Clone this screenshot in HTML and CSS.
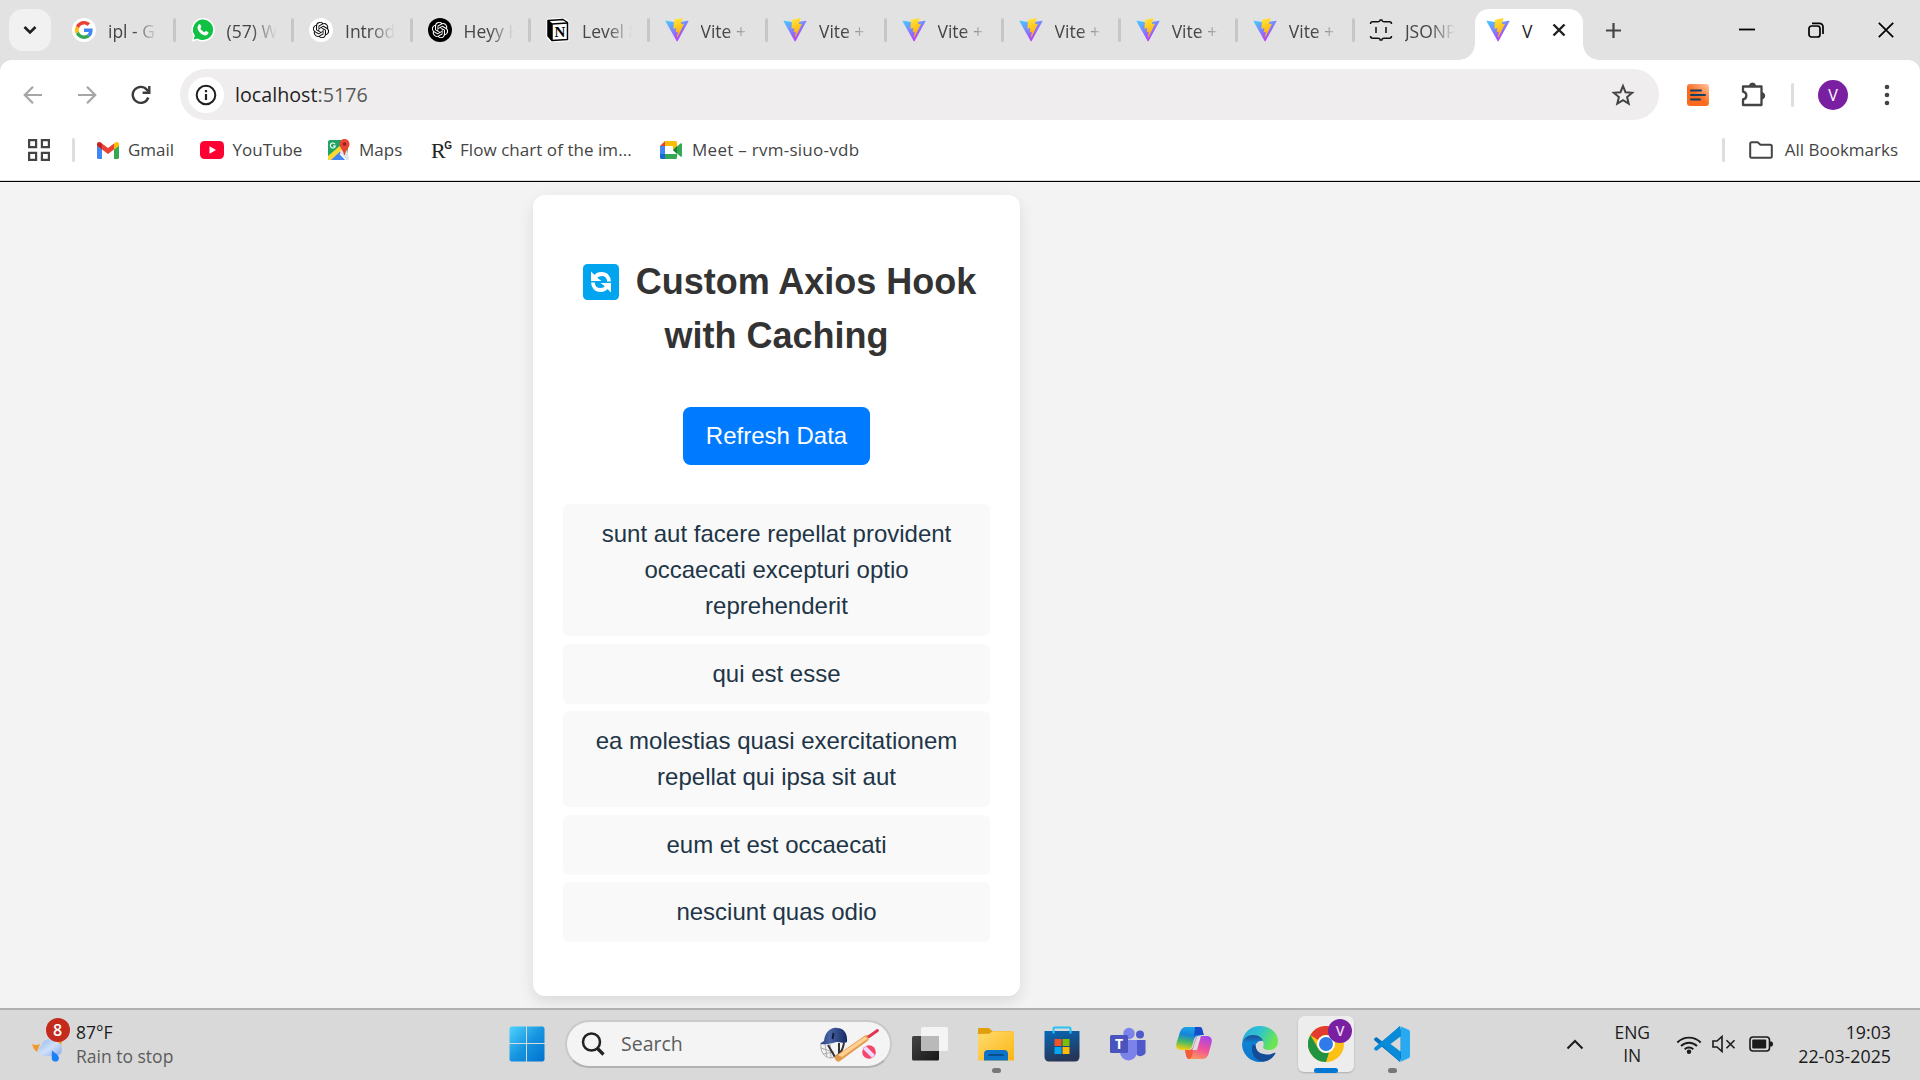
FILE: index.html
```html
<!DOCTYPE html>
<html lang="en">
<head>
<meta charset="utf-8">
<title>Vite + React</title>
<link rel="stylesheet" href="styles.css">
</head>
<body>
<svg class="defs" aria-hidden="true">
  <defs>
    <linearGradient id="va" x1="0" y1="0" x2=".6" y2="1"><stop offset="0" stop-color="#41d1ff"/><stop offset="1" stop-color="#bd34fe"/></linearGradient>
    <linearGradient id="vb" x1=".4" y1="0" x2=".6" y2="1"><stop offset="0" stop-color="#ffea42"/><stop offset=".1" stop-color="#ffdd35"/><stop offset="1" stop-color="#ffa800"/></linearGradient>
    <symbol id="vite" viewBox="0 0 410 404" preserveAspectRatio="none">
      <path fill="url(#va)" d="M399.641 59.5246L215.643 388.545C211.844 395.338 202.084 395.378 198.228 388.618L10.5817 59.5563C6.38087 52.1896 12.6802 43.2665 21.0281 44.7586L205.223 77.6824C206.398 77.8924 207.601 77.8904 208.776 77.6763L389.119 44.8058C397.439 43.2894 403.768 52.1434 399.641 59.5246Z"/>
      <path fill="url(#vb)" d="M292.965 1.5744L156.801 28.2552C154.563 28.6937 152.906 30.5903 152.771 32.8664L144.395 174.33C144.198 177.662 147.258 180.248 150.51 179.498L188.42 170.749C191.967 169.931 195.172 173.055 194.443 176.622L183.18 231.775C182.422 235.487 185.907 238.661 189.532 237.56L212.947 230.446C216.577 229.344 220.065 232.527 219.297 236.242L201.398 322.875C200.278 328.294 207.486 331.249 210.492 326.603L212.5 323.5L323.454 102.072C325.312 98.3645 322.108 94.137 318.036 94.9228L279.014 102.454C275.347 103.161 272.227 99.746 273.262 96.1583L298.731 7.86689C299.767 4.27314 296.636 0.855181 292.965 1.5744Z"/>
    </symbol>
    <symbol id="knot" viewBox="0 0 24 24">
      <path d="M22.2819 9.8211a5.9847 5.9847 0 0 0-.5157-4.9108 6.0462 6.0462 0 0 0-6.5098-2.9A6.0651 6.0651 0 0 0 4.9807 4.1818a5.9847 5.9847 0 0 0-3.9977 2.9 6.0462 6.0462 0 0 0 .7427 7.0966 5.98 5.98 0 0 0 .511 4.9107 6.051 6.051 0 0 0 6.5146 2.9001A5.9847 5.9847 0 0 0 13.2599 24a6.0557 6.0557 0 0 0 5.7718-4.2058 5.9894 5.9894 0 0 0 3.9977-2.9001 6.0557 6.0557 0 0 0-.7475-7.0729zm-9.022 12.6081a4.4755 4.4755 0 0 1-2.8764-1.0408l.1419-.0804 4.7783-2.7582a.7948.7948 0 0 0 .3927-.6813v-6.7369l2.02 1.1686a.071.071 0 0 1 .038.052v5.5826a4.504 4.504 0 0 1-4.4945 4.4944zm-9.6607-4.1254a4.4708 4.4708 0 0 1-.5346-3.0137l.142.0852 4.783 2.7582a.7712.7712 0 0 0 .7806 0l5.8428-3.3685v2.3324a.0804.0804 0 0 1-.0332.0615L9.74 19.9502a4.4992 4.4992 0 0 1-6.1408-1.6464zM2.3408 7.8956a4.485 4.485 0 0 1 2.3655-1.9728V11.6a.7664.7664 0 0 0 .3879.6765l5.8144 3.3543-2.0201 1.1685a.0757.0757 0 0 1-.071 0l-4.8303-2.7865A4.504 4.504 0 0 1 2.3408 7.872zm16.5963 3.8558L13.1038 8.364 15.1192 7.2a.0757.0757 0 0 1 .071 0l4.8303 2.7913a4.4944 4.4944 0 0 1-.6765 8.1042v-5.6772a.79.79 0 0 0-.407-.667zm2.0107-3.0231l-.142-.0852-4.7735-2.7818a.7759.7759 0 0 0-.7854 0L9.409 9.2297V6.8974a.0662.0662 0 0 1 .0284-.0615l4.8303-2.7866a4.4992 4.4992 0 0 1 6.6802 4.66zM8.3065 12.863l-2.02-1.1638a.0804.0804 0 0 1-.038-.0567V6.0742a4.4992 4.4992 0 0 1 7.3757-3.4537l-.142.0805L8.704 5.459a.7948.7948 0 0 0-.3927.6813zm1.0976-2.3654l2.602-1.4998 2.6069 1.4998v2.9994l-2.5974 1.4997-2.6067-1.4997Z"/>
    </symbol>
  </defs>
</svg>
<div class="screen">
  <header class="tabstrip">
    <button class="tab-search" aria-label="Search tabs"><svg width="14" height="10" viewBox="0 0 14 10"><path d="M1.5 2l5.5 5.5L12.500 2" fill="none" stroke="#1f1f1f" stroke-width="2.6"/></svg></button>
    <div class="tabs">
      <div class="tab"><svg class="fav" viewBox="0 0 24 24"><circle cx="12" cy="12" r="12" fill="#fff"/><g transform="translate(3 3) scale(.375)"><path fill="#EA4335" d="M24 9.500c3.540 0 6.710 1.220 9.210 3.600l6.850-6.850C35.900 2.380 30.470 0 24 0 14.620 0 6.510 5.380 2.560 13.220l7.980 6.190C12.430 13.720 17.740 9.500 24 9.500z"/><path fill="#4285F4" d="M46.980 24.550c0-1.570-.15-3.090-.38-4.550H24v9.020h12.940c-.58 2.960-2.260 5.480-4.780 7.180l7.730 6c4.510-4.180 7.090-10.360 7.090-17.650z"/><path fill="#FBBC05" d="M10.530 28.590c-.48-1.450-.76-2.990-.76-4.590s.27-3.140.76-4.590l-7.980-6.190C.92 16.460 0 20.120 0 24c0 3.880.92 7.540 2.560 10.780l7.970-6.190z"/><path fill="#34A853" d="M24 48c6.480 0 11.930-2.130 15.890-5.810l-7.730-6c-2.150 1.450-4.920 2.300-8.160 2.300-6.260 0-11.570-4.220-13.470-9.910l-7.980 6.190C6.510 42.620 14.620 48 24 48z"/></g></svg><span>ipl - G</span></div>
      <div class="tab"><svg class="fav" viewBox="0 0 24 24"><path fill="#fff" d="M12 0a11.500 11.500 0 0 1 0 23.500c-2 0-4-.5-5.600-1.500L.8 23.700l1.600-5.700A11.700 11.700 0 0 1 12 0z"/><path fill="#10c143" d="M12 1.600a10.100 10.100 0 0 1 0 20.300c-1.900 0-3.700-.5-5.200-1.500l-4.100 1.200 1.200-4A10.100 10.100 0 0 1 12 1.600z"/><path fill="#fff" d="M8.300 6.300c.7-.3 1 0 1.300.7l.7 1.700c.2.700-.9 1.500-.9 1.900.3 1 2.500 3.200 3.800 3.600.5.100 1.200-1.200 1.800-1.100l2 1c.6.400.5.900.3 1.500-.5 1.300-2.200 2-3.500 1.800-3.600-.8-6.600-3.800-7.200-7.200-.1-1.500.6-3.400 1.700-3.900z"/></svg><span>(57) W</span></div>
      <div class="tab"><svg class="fav" viewBox="0 0 24 24"><circle cx="12" cy="12" r="12" fill="#fff"/><use href="#knot" x="3.800" y="3.800" width="16.400" height="16.400" fill="#111"/></svg><span>Introd</span></div>
      <div class="tab"><svg class="fav" viewBox="0 0 24 24"><circle cx="12" cy="12" r="12" fill="#000"/><use href="#knot" x="3.800" y="3.800" width="16.400" height="16.400" fill="#fff"/></svg><span>Heyy H</span></div>
      <div class="tab"><svg class="fav" viewBox="0 0 24 24"><path d="M2 2.500L17 1l4.500 3.300v17.200L6 23l-4-4.500z" fill="#fff" stroke="#fff" stroke-width="3.500" stroke-linejoin="round"/><path d="M2 2.500L17 1.500l4.500 3v17L6 22.500l-4-4.500z" fill="#fff" stroke="#000" stroke-width="1.500" stroke-linejoin="round"/><path d="M2 2.500L6 6v16.500l-4-4.500z" fill="#000"/><path d="M2.500 3L6 6l15.500-1M6 6v16.500" fill="none" stroke="#000" stroke-width="1.500"/><text x="13.800" y="19.300" text-anchor="middle" class="n-glyph">N</text></svg><span>Level 8</span></div>
      <div class="tab"><svg class="fav"><use href="#vite" width="24" height="24"/></svg><span>Vite +</span></div>
      <div class="tab"><svg class="fav"><use href="#vite" width="24" height="24"/></svg><span>Vite +</span></div>
      <div class="tab narrow"><svg class="fav"><use href="#vite" width="24" height="24"/></svg><span>Vite +</span></div>
      <div class="tab narrow"><svg class="fav"><use href="#vite" width="24" height="24"/></svg><span>Vite +</span></div>
      <div class="tab narrow"><svg class="fav"><use href="#vite" width="24" height="24"/></svg><span>Vite +</span></div>
      <div class="tab narrow"><svg class="fav"><use href="#vite" width="24" height="24"/></svg><span>Vite +</span></div>
      <div class="tab last"><svg class="fav" viewBox="0 0 24 24" fill="none" stroke="#111" stroke-width="1.500"><path d="M1.500 6q0-2.200 2-2.200h5.500Q11 3.800 11.200 2h1.600Q13 3.800 15 3.800h5.500q2 0 2 2.200M1.500 18q0 2.200 2 2.200h5.500q2 0 2.200 1.800h1.600q.2-1.800 2.200-1.800h5.500q2 0 2-2.200M7 9v6M17 9v6"/></svg><span>JSONP</span></div>
      <div class="tab active"><svg class="fav"><use href="#vite" width="24" height="24"/></svg><span>V</span><svg class="x" width="14" height="14" viewBox="0 0 14 14"><path d="M1.500 1.500l11 11M12.500 1.500l-11 11" stroke="#1f1f1f" stroke-width="2.400"/></svg></div>
    </div>
    <svg class="newtab" width="17" height="17" viewBox="0 0 17 17"><path d="M8.500 1v15M1 8.500h15" stroke="#444" stroke-width="2.200"/></svg>
    <div class="winctl">
      <svg width="16" height="16" viewBox="0 0 16 16"><path d="M0 7.500h16" stroke="#000" stroke-width="1.800"/></svg>
      <svg width="16" height="16" viewBox="0 0 16 16" fill="none" stroke="#000" stroke-width="1.700"><rect x="1" y="4" width="11" height="11" rx="2.500"/><path d="M4 1.300h7.500A3.500 3.500 0 0 1 15 4.800V12"/></svg>
      <svg width="16" height="16" viewBox="0 0 16 16"><path d="M.8.800l14.400 14.400M15.200.8L.8 15.200" stroke="#000" stroke-width="1.700"/></svg>
    </div>
  </header>

  <div class="chrome">
    <div class="toolbar">
      <div class="navbtns">
        <svg width="20" height="20" viewBox="0 0 20 20" fill="none" stroke="#a6a6a6" stroke-width="2.200"><path d="M19 10H2.500M10 1.800L1.800 10l8.200 8.200"/></svg>
        <svg width="20" height="20" viewBox="0 0 20 20" fill="none" stroke="#a6a6a6" stroke-width="2.200"><path d="M1 10h16.500M10 1.800l8.200 8.200-8.200 8.200"/></svg>
        <svg width="20" height="20" viewBox="0 0 20 20" fill="none" stroke="#3c3c3c" stroke-width="2.400"><path d="M17.300 12.500A8 8 0 1 1 15.800 4.600L18 7"/><path d="M18.300 1v6.700h-6.700"/></svg>
      </div>
      <div class="omnibox">
        <div class="info"><svg width="22" height="22" viewBox="0 0 22 22"><circle cx="11" cy="11" r="9.300" fill="none" stroke="#1f1f1f" stroke-width="2"/><path d="M11 10v6M11 6v2.200" stroke="#1f1f1f" stroke-width="2.200"/></svg></div>
        <div class="url">localhost<span>:5176</span></div>
        <svg class="star" width="24" height="24" viewBox="0 0 24 24"><path d="M12 3l2.500 6.200 6.700.5-5.100 4.400 1.600 6.600L12 17.100l-5.700 3.600 1.600-6.600L2.800 9.700l6.700-.5z" fill="none" stroke="#444" stroke-width="2"/></svg>
      </div>
      <svg class="ext" width="22" height="22" viewBox="0 0 22 22"><defs><linearGradient id="or" x1="1" y1="0" x2=".5" y2=".6"><stop offset="0" stop-color="#ffc6a4"/><stop offset="1" stop-color="#fb6a1e"/></linearGradient></defs><rect width="22" height="22" rx="3" fill="url(#or)"/><path d="M4 6.500h10M4 11h14M4 15.500h9" stroke="#173f5f" stroke-width="2" stroke-linecap="round"/></svg>
      <svg class="puzzle" width="26" height="26" viewBox="0 0 26 26"><path d="M2 4.500h18.500v18.500H2v-5.500c4.500-.8 4.500-7 0-7.800z" fill="none" stroke="#444" stroke-width="2.300" stroke-linejoin="round"/><path d="M8.500 4a3 3 0 0 1 6 0zM21 10.500a3.300 3.300 0 0 1 0 6.500z" fill="#444" stroke="#444"/></svg>
      <i class="sep"></i>
      <div class="avatar">V</div>
      <svg class="dots" width="6" height="22" viewBox="0 0 6 22" fill="#444"><circle cx="3" cy="3" r="2.300"/><circle cx="3" cy="11" r="2.300"/><circle cx="3" cy="19" r="2.300"/></svg>
    </div>
    <div class="bookmarks">
      <svg class="apps" width="22" height="22" viewBox="0 0 22 22" fill="none" stroke="#444" stroke-width="2.200"><path d="M1.100 1.100h7v7h-7zM13.900 1.100h7v7h-7zM1.100 13.900h7v7h-7zM13.900 13.900h7v7h-7z"/></svg>
      <i class="sep"></i>
      <a class="bm gmail"><svg width="22" height="17" viewBox="0 0 22 17"><path fill="#4285f4" d="M0 3.500l5 3.800V17H1.500A1.500 1.500 0 0 1 0 15.500z"/><path fill="#34a853" d="M17 7.300l5-3.800v12a1.500 1.500 0 0 1-1.500 1.500H17z"/><path fill="#ea4335" d="M5 1.500l6 4.600 6-4.600v6L11 12 5 7.500z"/><path fill="#c5221f" d="M0 3V2.300C0 .3 2.200-.6 3.800.6L5 1.500v6L0 3.700z"/><path fill="#fbbc04" d="M22 3V2.300c0-2-2.200-2.900-3.800-1.700L17 1.500v6l5-3.800z"/></svg>Gmail</a>
      <a class="bm yt"><svg width="24" height="18" viewBox="0 0 24 18"><rect width="24" height="18" rx="4.500" fill="#ff0033"/><path d="M9.500 5.200v7.600L16 9z" fill="#fff"/></svg>YouTube</a>
      <a class="bm maps"><svg width="22" height="22" viewBox="0 0 22 22"><rect y="1" width="20" height="20" rx="2" fill="#1fa463"/><path d="M0 18L18 4l3 16-1 1H2z" fill="#dfe6ea"/><path d="M10 11L19 21H2z" fill="#4285f4"/><path d="M0 17L14 5l3 3L3 21H1L0 20z" fill="#fdd835"/><path d="M13 14l6 7h-2l-5.500-6z" fill="#fff"/><path d="M16.500 0A5 5 0 0 1 21.500 5c0 4-3.700 5.500-4.500 11h-1c-.8-5.500-4.500-7-4.500-11A5 5 0 0 1 16.500 0z" fill="#ea4335"/><circle cx="16.500" cy="5" r="1.800" fill="#8e2119"/><path d="M7 5.200a2.500 2.500 0 1 0 .3 1.800H5" fill="none" stroke="#fff" stroke-width="1.200"/></svg>Maps</a>
      <a class="bm rg"><b>R<sup>G</sup></b>Flow chart of the im...</a>
      <a class="bm meet"><svg width="22" height="18" viewBox="0 0 22 18"><path fill="#34a853" d="M0 13h17v3.500a1.500 1.500 0 0 1-1.500 1.500H5zM15 7l5.500-4.500c.6-.5 1.500-.2 1.500.6v11.800c0 .8-.9 1.100-1.500.6L13 9z"/><path fill="#fbbc04" d="M5 0h10.500A1.500 1.500 0 0 1 17 1.500v4L13 9V5H5z"/><path fill="#188038" d="M13 9l4-4v8z"/><path fill="#4285f4" d="M0 5h5v8H0z"/><path fill="#1967d2" d="M0 13h5v5H1.500A1.500 1.500 0 0 1 0 16.500z"/><path fill="#ea4335" d="M5 0v5H0z"/><path fill="#fff" d="M5 5h8v8H5z"/></svg>Meet – rvm-siuo-vdb</a>
      <i class="sep end"></i>
      <a class="bm all"><svg width="24" height="18" viewBox="0 0 24 18"><path d="M1.200 2.700c0-.9.600-1.500 1.500-1.500h6l2.700 2.500h9.900c.9 0 1.500.6 1.500 1.500v10.100c0 .9-.6 1.500-1.500 1.500H2.700c-.9 0-1.500-.6-1.500-1.500z" fill="none" stroke="#444" stroke-width="2"/></svg>All Bookmarks</a>
    </div>
  </div>

  <main class="page">
    <section class="card">
      <h1><svg class="sync" width="36" height="36" viewBox="0 0 36 36"><rect width="36" height="36" rx="4.500" fill="#00a4ef"/><path d="M12 13.500Q14 10 18.500 10c5 0 7.500 3.500 7.500 7.500M24 22.500Q22 26 17.500 26c-5 0-7.500-3.500-7.500-7.500" fill="none" stroke="#fff" stroke-width="3.800"/><path d="M8 7.500v9.500h10.500l-4-3zM28 28.500V19H17.500l4 3z" fill="#fff"/></svg> Custom Axios Hook with Caching</h1>
      <button class="refresh">Refresh Data</button>
      <ul>
        <li>sunt aut facere repellat provident occaecati excepturi optio reprehenderit</li>
        <li>qui est esse</li>
        <li>ea molestias quasi exercitationem repellat qui ipsa sit aut</li>
        <li>eum et est occaecati</li>
        <li>nesciunt quas odio</li>
      </ul>
    </section>
  </main>

  <footer class="taskbar">
    <div class="weather">
      <div class="wicon"><svg width="34" height="26" viewBox="0 0 34 26"><defs><linearGradient id="cl" x1="0" y1="0" x2="1" y2="1"><stop offset="0" stop-color="#8fb8ee"/><stop offset=".5" stop-color="#cfe0fa"/><stop offset="1" stop-color="#86a8ea"/></linearGradient></defs><path d="M0 7c4 2 8 0 8 0l-3 8C2 13 1 10 0 7zM24 3h6l-1 6z" fill="#f09a2c"/><path d="M10 19a6 6 0 0 1-.5-10.500A8.500 8.500 0 0 1 24 5a7.200 7.200 0 0 1 1 14z" fill="url(#cl)"/><path d="M20 13c0 2 7 4 7 8.500a3.700 3.700 0 0 1-7.300 0z" fill="#1682f5"/></svg><span class="badge">8</span></div>
      <div class="wtext"><div>87°F</div><div class="dim">Rain to stop</div></div>
    </div>
    <nav class="apps-row">
      <div class="tile"><svg width="36" height="36" viewBox="0 0 36 36"><defs><linearGradient id="wn" x1="0" y1="0" x2="1" y2="1"><stop offset="0" stop-color="#4fd4ff"/><stop offset=".5" stop-color="#1795e0"/><stop offset="1" stop-color="#0072d0"/></linearGradient></defs><path fill="url(#wn)" d="M2 .500h15v16.500H.500V2zM18 .500h16l1.500 1.500v15H18zM.500 18H17v17.500H2L.500 34zM18 18h17.500v16L34 35.500H18z"/></svg></div>
      <div class="search"><svg width="24" height="24" viewBox="0 0 24 24" fill="none" stroke="#222" stroke-width="2.500"><circle cx="10.500" cy="10" r="8.500"/><path d="M16.500 16.500l6 6" stroke-width="3.200"/></svg><span>Search</span>
        <svg class="cricket" width="60" height="36" viewBox="0 0 60 36"><defs><linearGradient id="hm" x1="0" y1="0" x2="1" y2="0"><stop offset="0" stop-color="#25407c"/><stop offset=".35" stop-color="#4a64a4"/><stop offset="1" stop-color="#152a63"/></linearGradient></defs><path d="M2 18c-1 7 3 14 10 14l5-2M2 22l12 4M4 28l11-2M6 18l2 13M11 18l1 14" stroke="#aaa" fill="none"/><path d="M9 19l7 12M25 17c-1 5-2 9-8 14M20 17v12" stroke="#333" stroke-width="2" fill="none"/><path d="M5 15C6 6 12 1 18 2c7 0 11 6 10 14-4 2-6 0-9 0-4 0-12 4-18 1.500z" fill="url(#hm)"/><path d="M14.500 7l-1 6" stroke="#0b183c" stroke-width="1.800"/><path d="M15 31L46 9.500q3-1.500 4 1 .5 2.500-1.500 4.500L21 35q-2 1.500-4-.5z" fill="#e39b50"/><path d="M19 29L46 10.500l3 2L23 31z" fill="#ffd090"/><path d="M50 10.500l8.500-6" stroke="#e23350" stroke-width="2.800" stroke-linecap="round"/><circle cx="50" cy="26" r="6.800" fill="#f8456a"/><path d="M45.500 21.500l9 9" stroke="#ecdcff" stroke-width="4"/></svg></div>
      <div class="tile"><svg width="36" height="36" viewBox="0 0 36 36"><defs><linearGradient id="tv" x1="0" y1="0" x2="1" y2="1"><stop offset="0" stop-color="#444"/><stop offset="1" stop-color="#181818"/></linearGradient></defs><rect y="10" width="27" height="24.500" rx="1.500" fill="url(#tv)"/><rect x="9" y="1" width="27" height="24" rx="1.500" fill="#f4f4f4"/><path d="M9 10h18v15H10.500L9 23.500z" fill="#b9b9b9"/></svg></div>
      <div class="tile run"><svg width="36" height="36" viewBox="0 0 36 36"><defs><linearGradient id="fo" x1="0" y1="0" x2="1" y2="1"><stop offset="0" stop-color="#ffdc70"/><stop offset="1" stop-color="#fbb613"/></linearGradient></defs><path d="M0 3.500C0 2.500.500 2 1.500 2H10c2 0 2 1.500 4.500 3H34v6H0z" fill="#e0a00c"/><path d="M0 8l11-.3c2 0 2-2.400 4-2.400h19.500c1 0 1.500.7 1.500 1.700v27.500H0z" fill="url(#fo)"/><path d="M6 34.500V28a4 4 0 0 1 4-4h16a4 4 0 0 1 4 4v6.500z" fill="#0c74c8"/><path d="M11 29h14" stroke="#064f8e" stroke-width="2" stroke-linecap="round"/></svg></div>
      <div class="tile"><svg width="36" height="36" viewBox="0 0 36 36"><defs><linearGradient id="st" x1="0" y1="0" x2=".3" y2="1"><stop offset="0" stop-color="#0669b9"/><stop offset="1" stop-color="#263659"/></linearGradient></defs><path d="M.500 5H35.500v26a4.500 4.500 0 0 1-4.500 4.500H5A4.500 4.500 0 0 1 .500 31z" fill="url(#st)"/><path d="M9.500 7.500V2.500q0-1 1-1h15q1 0 1 1v5" fill="none" stroke="#28c3f5" stroke-width="2"/><path d="M10.500 13h7v7h-7z" fill="#f35325"/><path d="M18.500 13h7v7h-7z" fill="#81bc06"/><path d="M10.500 21h7v7h-7z" fill="#05a6f0"/><path d="M18.500 21h7v7h-7z" fill="#ffba08"/></svg></div>
      <div class="tile"><svg width="36" height="36" viewBox="0 0 36 36"><circle cx="30" cy="8.500" r="4" fill="#5059c9"/><path d="M26 14h9.500v10a5 5 0 0 1-9.500 3z" fill="#5059c9"/><circle cx="19" cy="7.500" r="5.700" fill="#7b83eb"/><path d="M10 14h17v12a8.500 8.500 0 0 1-17 0z" fill="#7b83eb"/><rect y="9" width="18" height="18" rx="1.500" fill="#4b53bc"/><text x="9" y="22.800" text-anchor="middle" class="t-glyph">T</text></svg></div>
      <div class="tile"><svg width="36" height="36" viewBox="0 0 36 36"><defs><linearGradient id="c1" x1=".5" y1="0" x2=".3" y2="1"><stop offset="0" stop-color="#18a5ea"/><stop offset=".35" stop-color="#1584d8"/><stop offset=".65" stop-color="#46b868"/><stop offset="1" stop-color="#f5d00c"/></linearGradient><linearGradient id="c2" x1=".7" y1="0" x2=".3" y2="1"><stop offset="0" stop-color="#a946e8"/><stop offset=".5" stop-color="#f0519b"/><stop offset="1" stop-color="#ff9b58"/></linearGradient></defs><path d="M10 1h13c3 0 3.500 3 4.500 7.500L22 10c-3 0-4 3-5 7s-2 7-5.500 7H6c-5 0-6.500-3-5.500-7L4 6c1-3 3-5 6-5z" fill="url(#c1)"/><path d="M19 1h5c3 0 2.500 5 4 8h-7c-1 0-2 .3-3 2z" fill="#174bc8"/><path d="M26 33H14c-3 0-4-3-5-8.500h4c3 0 4.200-3 5.200-7s2-7.500 5.800-7.500h6c5 0 6.500 3 5.500 7l-3 11c-1 3-3 5-6.500 5z" fill="url(#c2)"/><path d="M9 24h4c3 0 4-2 5-5l-1.500 9c-1 4-2 5-3.500 5-3 0-3-5-4-9z" fill="#f45b3b"/><path d="M22 10h3l-4 14h-5c2-2 3-11 6-14z" fill="#dcdcdc"/></svg></div>
      <div class="tile"><svg width="36" height="36" viewBox="0 0 36 36"><defs><linearGradient id="e1" x1="0" y1="0" x2="1" y2=".4"><stop offset="0" stop-color="#2aa8e0"/><stop offset=".5" stop-color="#2fc3d0"/><stop offset="1" stop-color="#6be650"/></linearGradient><linearGradient id="e2" x1="0" y1="0" x2="0" y2="1"><stop offset="0" stop-color="#1b4c94"/><stop offset=".3" stop-color="#1184d5"/><stop offset="1" stop-color="#0d74cd"/></linearGradient></defs><path d="M0 17C1 6 9 0 18 0c10 0 18 7 18 15 0 6-4 9-9 9-4 0-7-1.500-5.500-4C23 16 18 8 8 10c-4 .8-7 4-8 7z" fill="url(#e1)"/><path d="M0 18C1 12 6 9 11 9c6 0 9 3 10.500 6-5-1-8 2-8 6.500 0 6 6 11 14 9 3-1 6-3 6-3.500C30 33 24 36 18 36 8 36 0 28 0 18z" fill="url(#e2)"/><path d="M11 18c-3 6 0 16 10 17.700 6-.5 10-4 12.500-8.500-.5-1-1.500-.3-3 .3-8 3-17-1-16.700-7.500z" fill="#144c98"/></svg></div>
      <div class="tile on"><svg width="36" height="36" viewBox="0 0 36 36"><circle cx="18" cy="18" r="18" fill="#fbc116"/><path d="M2.400 9A18 18 0 0 1 33.600 9H18a9 9 0 0 0-8 5z" fill="#e33b2e"/><path d="M2.400 9l7.800 13.500A9 9 0 0 0 21 26.500L18 36A18 18 0 0 1 2.400 9z" fill="#229342"/><circle cx="18" cy="18" r="9" fill="#fff"/><circle cx="18" cy="18" r="7" fill="#2f7bea"/></svg><span class="prof">V</span></div>
      <div class="tile run"><svg width="36" height="36" viewBox="0 0 36 36"><path d="M26 0L9 16 3 11.500Q2 10.800 1.200 11.700L.4 12.500q-.8 1 .2 1.900L26 36l2-8z" fill="#0070bb"/><path d="M26 36L9 20l-6 4.500q-1 .7-1.800-.2l-.8-.9q-.8-1 .2-1.900L26 0l2 10z" fill="#0a8bd8"/><path d="M26 0l9 4q1 .6 1 1.800v24.500q0 1.200-1 1.700l-9 4q1 0 1-2V2q0-2-1-2z" fill="#29a9f2"/><path d="M26.500 10.500v15L16.500 18z" fill="#d9d9d9"/></svg></div>
    </nav>
    <div class="tray">
      <svg class="up" width="18" height="11" viewBox="0 0 18 11"><path d="M1.500 9.500L9 2l7.500 7.500" fill="none" stroke="#1b1b1b" stroke-width="2"/></svg>
      <div class="lang">ENG<br>IN</div>
      <svg class="wifi" width="26" height="20" viewBox="0 0 26 20" fill="none" stroke="#1b1b1b" stroke-width="1.900"><path d="M1.300 8.500a16.500 16.500 0 0 1 23.400 0M5 12a11.500 11.500 0 0 1 16 0M8.700 15.200a6.300 6.300 0 0 1 8.600 0"/><circle cx="13" cy="17.700" r="1.300" fill="#1b1b1b"/></svg>
      <svg class="mute" width="24" height="18" viewBox="0 0 24 18" fill="none" stroke="#1b1b1b" stroke-width="1.600"><path d="M1 6h4l5-4.500v15L5 12H1zM14.500 5.200l8 8M22.500 5.200l-8 8"/></svg>
      <svg class="bat" width="24" height="16" viewBox="0 0 24 16"><rect x="1" y="1" width="19.500" height="14" rx="3" fill="none" stroke="#1b1b1b" stroke-width="1.600"/><rect x="3.200" y="3.500" width="14" height="9" rx="1" fill="#1b1b1b"/><path d="M21 5.500h1.500q1.500 0 1.500 2.500t-1.500 2.500H21z" fill="#1b1b1b"/></svg>
      <div class="clock">19:03<br>22-03-2025</div>
    </div>
  </footer>
</div>
</body>
</html>
```
FILE: styles.css
```css
* { box-sizing: border-box; }
body { margin: 0; overflow: hidden; font-family: "Open Sans", "Noto Sans", sans-serif; }
svg { display: block; flex: none; }
.defs { position: absolute; width: 0; height: 0; }
.screen { width: 1920px; height: 1080px; display: flex; flex-direction: column; overflow: hidden; background: #e2e2e2; }
button { border: 0; padding: 0; }

/* tab strip */
.tabstrip { flex: none; height: 60px; display: flex; align-items: center; padding-left: 9px; background: #e2e2e2; }
.tab-search { width: 42px; height: 42px; border-radius: 14px; background: #f1f1f1; display: grid; place-items: center; }
.tabs { display: flex; align-self: stretch; margin-left: 5px; }
.tab { position: relative; width: 118.5px; height: 60px; display: flex; align-items: center; padding-left: 16px; font-size: 17.500px; color: #454545; }
.tab.narrow { width: 117.1px; }
.tab::after { content: ""; position: absolute; right: -1px; top: 18px; width: 3px; height: 24px; border-radius: 2px; background: #c6c6c6; }
.tab.last::after { display: none; }
.fav { width: 24px; height: 24px; }
.tab span { margin: 1px 0 0 12px; width: 50px; overflow: hidden; white-space: nowrap; -webkit-mask-image: linear-gradient(90deg, #000 50%, transparent 100%); mask-image: linear-gradient(90deg, #000 50%, transparent 100%); }
.tab.last { width: 121px; padding-left: 15px; }
.tab.active { width: 108px; height: 51px; margin-top: 9px; padding: 0 0 9px 11px; background: #fff; border-radius: 14px 14px 0 0; color: #1f1f1f; }
.tab.active span { width: 12px; -webkit-mask-image: none; mask-image: none; }
.tab.active .x { margin-left: 18px; }
.tab.active::before, .tab.active::after { content: ""; position: absolute; top: auto; bottom: 0; width: 16px; height: 16px; border-radius: 0; }
.tab.active::before { left: -16px; background: radial-gradient(circle at 0 0, transparent 15.5px, #fff 16px); }
.tab.active::after { right: -16px; background: radial-gradient(circle at 100% 0, transparent 15.5px, #fff 16px); }
.n-glyph { font: bold 15px "Liberation Serif", serif; fill: #000; }
.newtab { margin-left: 22px; }
.winctl { margin-left: auto; margin-right: 26.500px; display: flex; gap: 53.500px; }

/* toolbar */
.chrome { flex: none; height: 122px; background: #fff; border-radius: 12px 12px 0 0; border-bottom: 1px solid #000; box-shadow: inset 0 -1px #dadada; }
.toolbar { height: 69px; display: flex; align-items: center; padding: 0 30px 0 23px; }
.navbtns { display: flex; gap: 34px; width: 157px; }
.omnibox { width: 1479px; height: 51px; border-radius: 26px; background: #efeded; display: flex; align-items: center; padding-left: 8px; }
.info { width: 36px; height: 36px; border-radius: 50%; background: #fff; display: grid; place-items: center; }
.url { margin-left: 11px; font-size: 19.700px; color: #1f1f1f; }
.url span { color: #5a5a5a; }
.star { margin-left: auto; margin-right: 24px; }
.ext { margin-left: 28px; }
.puzzle { margin-left: 32px; }
.sep { width: 3px; height: 24px; border-radius: 2px; background: #dedede; }
.toolbar .sep { margin-left: 24px; }
.avatar { margin-left: 24px; width: 30px; height: 30px; border-radius: 50%; background: #7b1fa2; color: #fff; font-size: 16px; display: grid; place-items: center; }
.dots { margin-left: auto; }
.bookmarks { height: 40px; display: flex; align-items: center; padding: 0 22px 0 28px; font-size: 17px; color: #454545; }
.bookmarks svg, .bookmarks .sep { position: relative; top: 1px; }
.bookmarks .sep { margin-left: 22px; }
.bookmarks .sep.end { margin-left: auto; margin-right: 24px; }
.bm { display: flex; align-items: center; gap: 9px; white-space: nowrap; }
.gmail { margin-left: 22px; width: 103px; }
.yt { width: 128px; gap: 8.500px; }
.maps { width: 103px; }
.rg { width: 229px; gap: 11px; letter-spacing: .05px; }
.rg b { font: 22px "Liberation Serif", serif; width: 18px; margin-top: 3px; color: #222; letter-spacing: -1.500px; }
.rg sup { font: bold 10px "Liberation Sans", sans-serif; vertical-align: 9px; line-height: 0; letter-spacing: 0; }
.meet { gap: 10px; letter-spacing: .27px; }
.all { gap: 12px; }

/* page */
.page { flex: none; height: 826px; background: #f3f3f3; overflow: hidden; display: flex; align-items: flex-start; padding: 13px 0 0 533px; }
.card { width: 487px; height: 801px; background: #fff; border-radius: 12px; box-shadow: 0 6px 15px rgba(0,0,0,.1); padding: 60px 30px 0; text-align: center; font-family: "Liberation Sans", Arial, sans-serif; }
h1 { margin: 0; font-size: 36px; line-height: 54px; color: #333; }
.sync { display: inline-block; vertical-align: -6px; margin: 0 7px 0 6px; }
.refresh { display: block; margin: 44px auto 39px; width: 187px; height: 58px; border-radius: 7.500px; background: #007bff; color: #fff; font: 24px "Liberation Sans", Arial, sans-serif; }
ul { list-style: none; margin: 0; padding: 0; display: flex; flex-direction: column; gap: 7.500px; }
li { padding: 12px 15px; border-radius: 6px; background: #f9f9f9; font-size: 24px; line-height: 36px; color: #213547; }

/* taskbar */
.taskbar { flex: none; height: 72px; padding-bottom: 2px; background: #d9d9d9; border-top: 2px solid #b0b0b0; display: flex; align-items: center; font-size: 17.500px; line-height: 24px; color: #1b1b1b; }
.weather { width: 499px; padding-left: 32px; display: flex; align-items: center; gap: 10px; }
.wicon { position: relative; padding-top: 12px; }
.badge { position: absolute; left: 13.500px; top: -7px; width: 24px; height: 24px; border-radius: 50%; background: #c42b1c; color: #fff; font-size: 16px; font-weight: 600; text-align: center; }
.wtext { margin-top: -1px; }
.dim { color: #5c5c5c; }
.apps-row { display: flex; align-items: center; gap: 10px; margin-right: -10px; }
.tile { position: relative; width: 56px; height: 56px; border-radius: 6px; display: grid; place-items: center; }
.tile.on { background: #ededed; box-shadow: 0 1px 2px rgba(0,0,0,.2); }
.tile.run::after, .tile.on::after { content: ""; position: absolute; bottom: -1px; left: 23.500px; width: 9px; height: 5px; border-radius: 3px; background: #777; }
.tile.on::after { left: 16px; width: 24px; background: #0078d4; }
.t-glyph { font: bold 14px "Open Sans", sans-serif; fill: #fff; }
.prof { position: absolute; left: 30px; top: 3px; width: 24px; height: 24px; border-radius: 50%; background: #7b1fa2; color: #e6d4ee; font-size: 14px; font-weight: 600; text-align: center; }
.search { width: 327px; height: 48px; border-radius: 24px; background: #f4f4f4; border: 2px solid #c9c9c9; border-bottom-color: #b2b2b2; display: flex; align-items: center; padding: 0 11px 0 14px; font-size: 19.500px; color: #5c5c5c; }
.search span { margin-left: 16px; }
.cricket { margin-left: auto; }
.tray { margin-left: auto; margin-right: 29px; display: flex; align-items: center; }
.lang { margin-left: 30px; width: 36px; text-align: center; line-height: 23px; }
.wifi { margin-left: 26px; }
.mute { margin-left: 10px; }
.bat { margin-left: 13px; }
.clock { margin-left: 25px; margin-top: -1px; text-align: right; font-size: 17.800px; }
```
